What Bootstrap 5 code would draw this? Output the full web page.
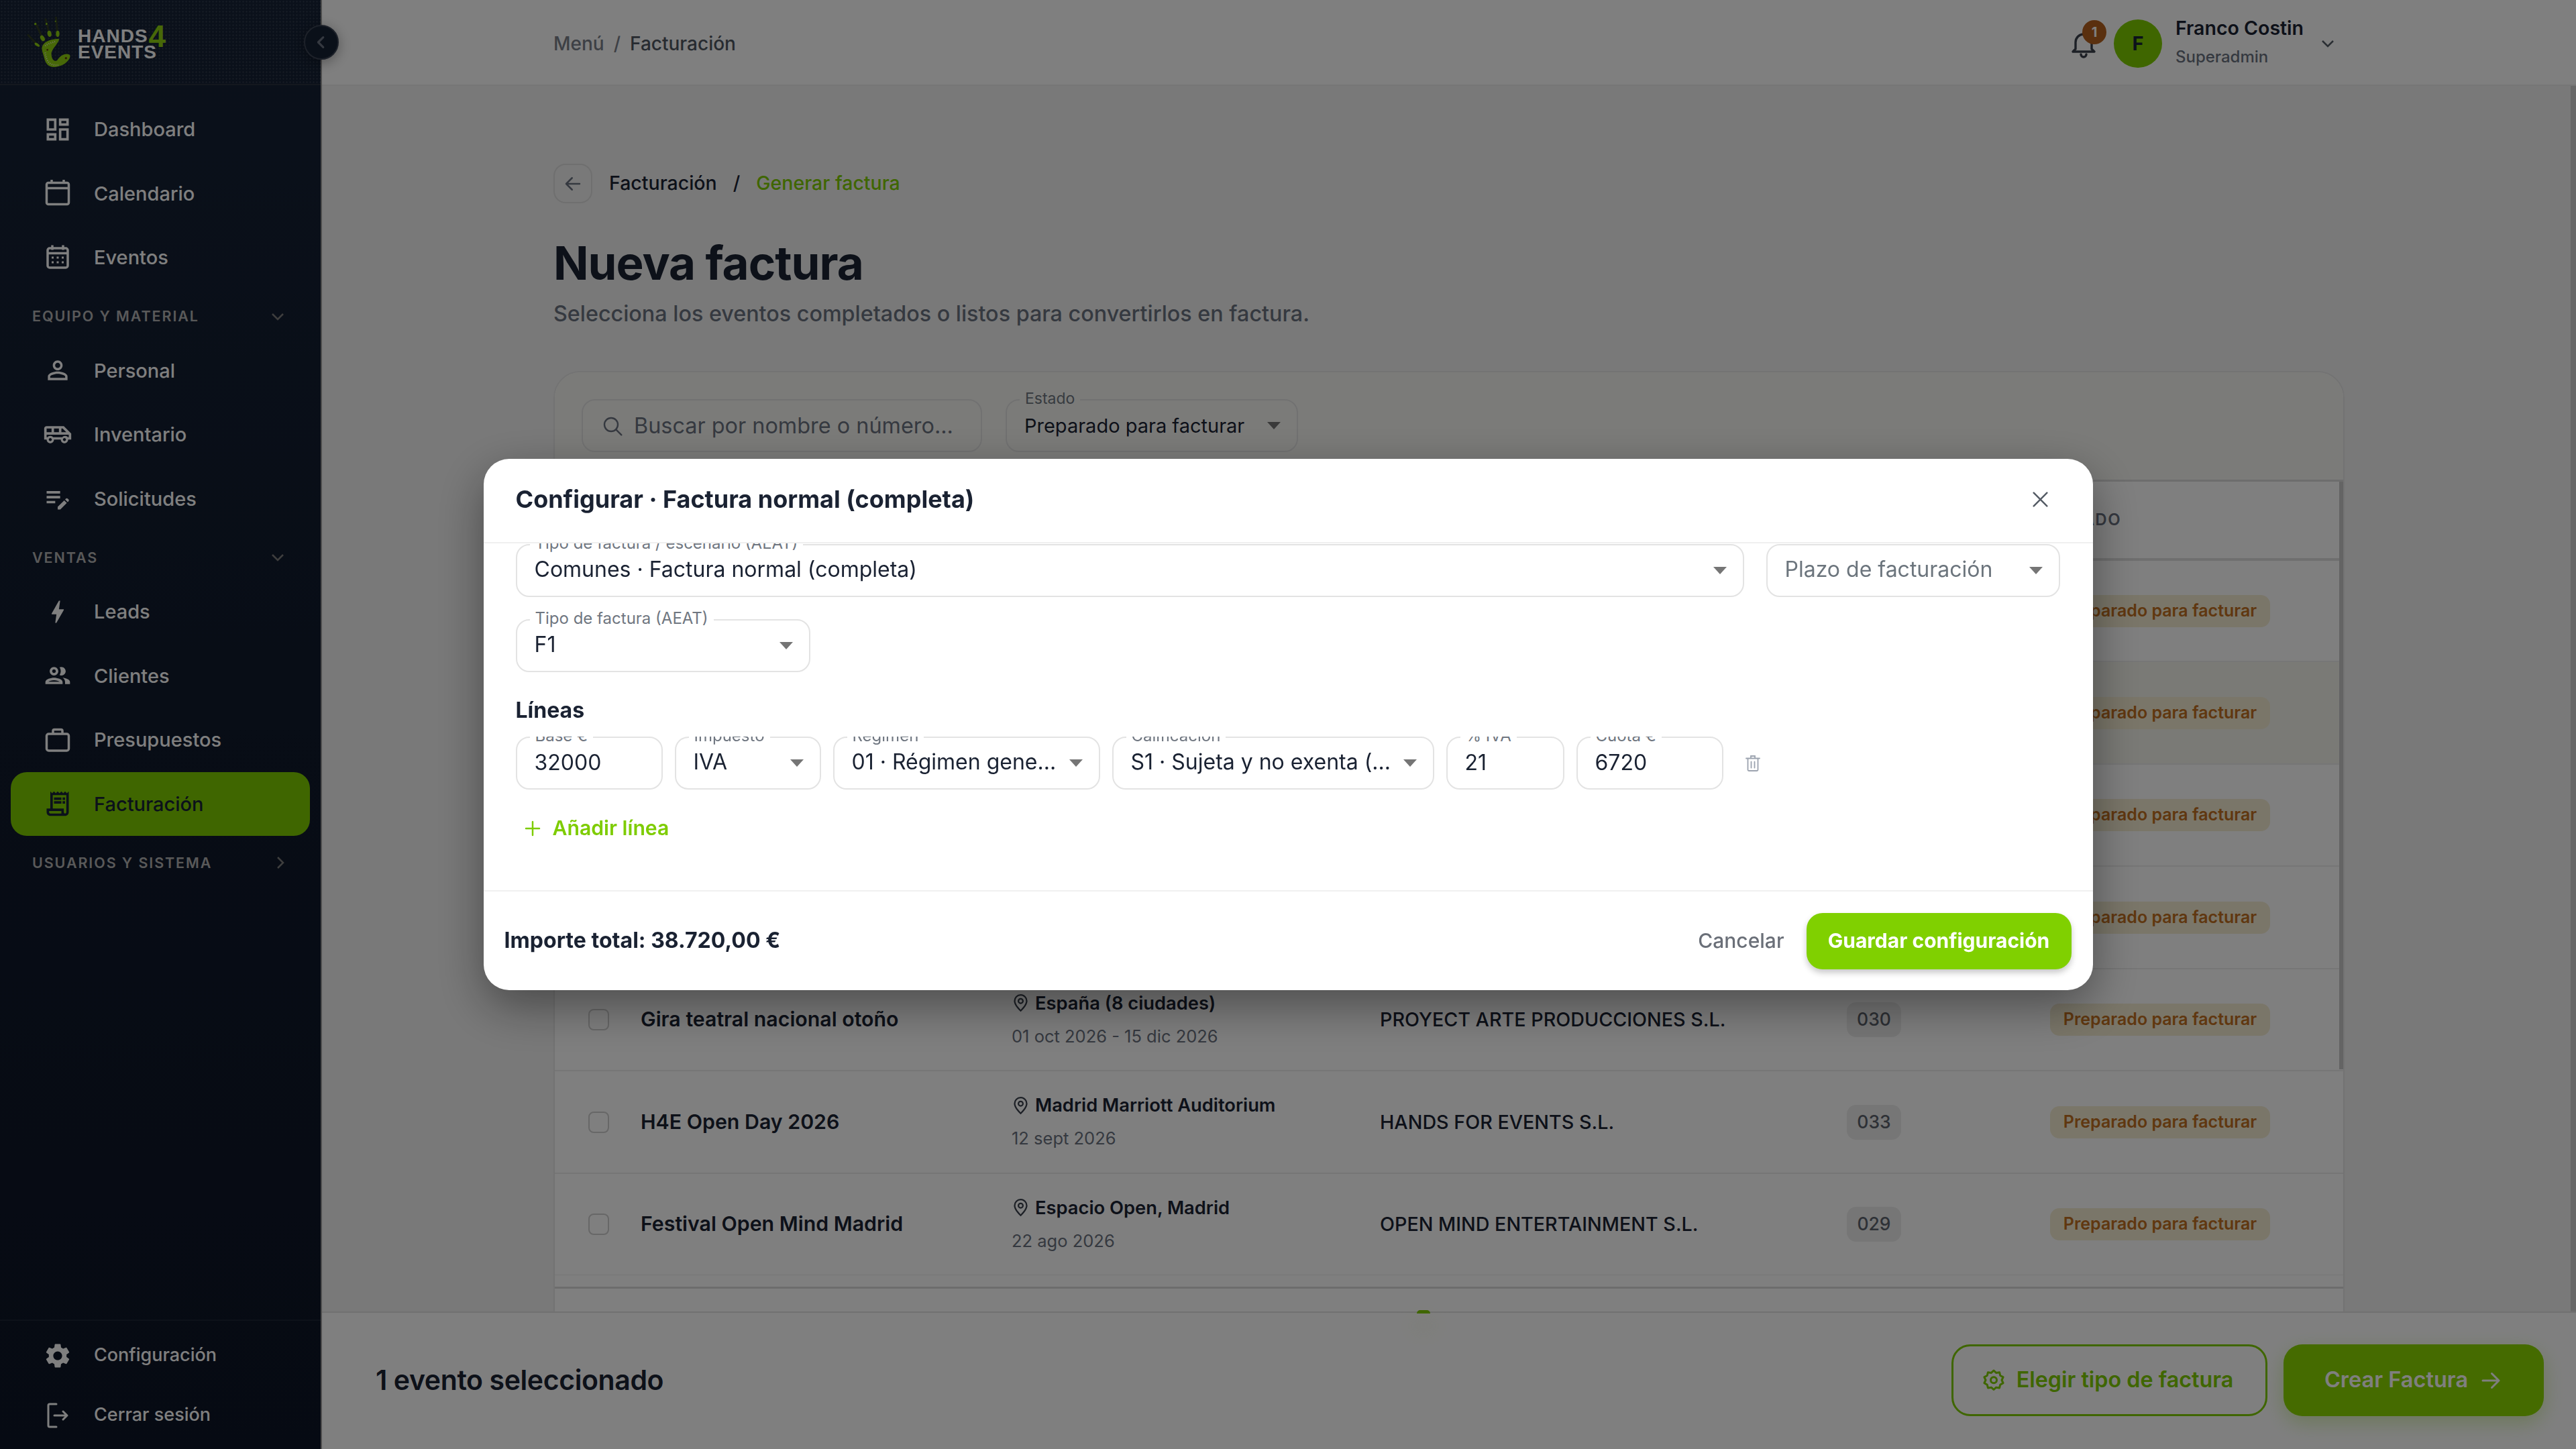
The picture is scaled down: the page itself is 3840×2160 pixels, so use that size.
<!DOCTYPE html>
<html lang="es">
<head>
<meta charset="utf-8">
<title>Nueva factura</title>
<link href="https://cdn.jsdelivr.net/npm/bootstrap@5.3.0/dist/css/bootstrap.min.css" rel="stylesheet">
<style>
html,body{height:100%}
body{font-family:Inter,"Noto Sans",sans-serif;color:#1a2232;background:#f3f3f3;overflow:hidden;height:2160px;width:3840px}
svg{display:block;flex:none}
.app-shell{height:2160px}
.sidebar{width:480px;flex:none;background:linear-gradient(180deg,#162236 0,#101a2c 50%,#0d1526 100%);color:#fff;border-right:2px solid #9a9a9a}
.side-head{height:127px;flex:none;padding:25px 0 0 40px;border-bottom:2px solid #28303f;gap:10px;background-image:radial-gradient(rgba(255,255,255,.09) 1px,transparent 1.4px);background-size:5px 5px}
.logo-words{color:#fff;font-family:"Liberation Sans",sans-serif;font-weight:700;font-size:28px;letter-spacing:1px;line-height:24px;padding-top:17px;width:140px}
.logo-line{height:24px}
.logo-four{color:#8fd010;font-size:46px;line-height:24px;letter-spacing:0;margin-left:1px}
.side-toggle{width:52px;height:52px;top:37px;right:-27px;background:#142033;border:2px solid #3a4353;border-radius:50%;box-shadow:0 4px 20px rgba(0,0,0,.35);z-index:3}
.side-nav{padding-top:18px}
.side-link{height:95.5px;margin:0 16px;padding-left:48px;gap:32px;color:#fff;text-decoration:none;font-size:29px;font-weight:500;border-radius:24px}
.side-link.is-on{background:#7ecc00;color:#162236}
.side-sec{height:73px;padding:7px 54px 0 48px;color:#b3b3b3;font-size:21.5px;font-weight:600;letter-spacing:1.9px}
.side-foot{padding:7px 0 6px;border-top:2px solid #1b2434}
.side-foot .side-link{height:89px;font-size:27px;padding-left:48px}
.main-col{min-width:0}
.topbar{height:128px;flex:none;background:#fff;border-bottom:2px solid #ececec;padding:4px 360px 0 345px}
.crumb-top{font-size:28px;font-weight:500;color:#7a808a;gap:14px}
.crumb-top b{font-weight:500;color:#4f5661}
.bell-wrap{width:60px;height:60px;margin-right:9px}
.bell-badge{top:-5px;left:22px;width:36px;height:36px;background:#b4601e;color:#fff;font-size:20px;font-weight:700;border-radius:50%}
.avatar{width:72px;height:72px;background:#7ecc00;border-radius:50%;font-size:29px;font-weight:700;color:#162236}
.who-name{font-size:28.500px;font-weight:600;line-height:1.2;margin-top:-6px}
.who-role{font-size:24px;font-weight:500;color:#6b7280;margin-top:12px;line-height:1.2}
.who-caret{margin-left:26px}
.content-area{min-height:0;overflow:hidden;border-right:8px solid #d2d2d2;padding:116px 337px 0 345px}
.back-btn{width:58px;height:59px;border:2px solid #dedede;border-radius:18px;background:transparent}
.crumb-page{font-size:28.500px;font-weight:500;gap:24px;margin-left:25px}
.crumb-green{color:#7ecc00}
.page-title{font-size:69px;font-weight:700;letter-spacing:-1px;line-height:1;margin:55px 0 0}
.page-sub{font-size:32.300px;font-weight:500;color:#6b7280;margin:22px 0 0;line-height:1.2}
.panel{margin-top:65px;border:2px solid #e6e6e6;border-radius:40px 40px 0 0;background:#fff;height:1500px;overflow:hidden}
.panel-top{height:160px;flex:none;background:#f7f7f3;padding:40px 40px 0;gap:35px}
.fld{height:79px;border:2px solid #e3e3e3;border-radius:20px}
.search-fld{width:597px;gap:16px;padding:2px 0 0 28px;color:#6b7280;font-size:32.400px}
.fld-box{height:79px}
.fld-label{top:-16px;left:21px;padding:0 8px;background:#fff;font-size:24px;line-height:30px;color:#6f7680;white-space:nowrap;z-index:2}
.panel-top .fld-label{background:#f7f7f3;font-size:23px}
.ctl{height:100%;border:2px solid #e3e3e3;border-radius:20px;font-size:32px;color:#1a2232;padding:0 26px 3px;background-color:transparent;box-shadow:none}
.form-select.ctl{padding-right:58px;background-image:url("data:image/svg+xml,%3csvg xmlns='http://www.w3.org/2000/svg' viewBox='0 0 20 11'%3e%3cpath fill='%23757575' d='M0 0h20L10 11z'/%3e%3c/svg%3e");background-size:20px 11px;background-position:right 24px center}
.st-sel{width:436px}
.st-sel .ctl{font-size:29px;padding-bottom:0}
.table-wrap{height:1186px;overflow:hidden;border-top:3px solid #dbdbdb;flex:none}
.inv-table{table-layout:fixed;width:2667px;margin:0}
.inv-table td,.inv-table th{padding:0;vertical-align:middle;border-bottom:2px solid #ececec;background:transparent;box-shadow:none}
.inv-table th{height:116px;font-size:24px;font-weight:600;letter-spacing:1.500px;color:#6b7280;border-bottom-width:4px;border-color:#dedede}
.inv-table td{height:152.500px;color:#1a2232}
.c1{width:128px}.c2{width:553px}.c3{width:549px}.c4{width:696px}.c5{width:303px}
.inv-table td:first-child,.inv-table th:first-child{padding-left:50px}
.row-on td{background:#f4f4ec}
.chk-box{width:31px;height:32px;border:2px solid #cfcfcf;border-radius:8px;display:block}
.row-on .chk-box{background:#7ecc00;border-color:#7ecc00}
.ev-name{font-size:30.300px;font-weight:600}
.ev-loc{font-size:27.300px;font-weight:600;gap:8px;line-height:30px}
.ev-date{font-size:25.500px;color:#6b7280;margin-top:19px;line-height:30px}
.ev-client{font-size:28.700px;font-weight:500;color:#454b55}
.num-pill{width:81px;height:52px;background:#ededed;color:#5c626c;font-size:26.500px;font-weight:500;border-radius:14px}
.st-pill{width:328px;height:48px;background:#f4ecd2;color:#c06f20;font-size:25px;font-weight:600;border-radius:14px}
.thin-bar{top:0;right:0;width:6px;height:876px;background:#c9c9c9}
.panel-rest{border-top:3px solid #dbdbdb;margin-top:17px}
.actionbar{height:205px;flex:none;background:#fff;border-top:2px solid #e2e2e2;padding:0 48px 2px 80px}
.sel-count{font-size:41px;font-weight:600;letter-spacing:-.4px}
.btn-ghost-g{height:107px;width:471px;border:3px solid #7ecc00;border-radius:28px;color:#7ecc00;font-size:32.300px;font-weight:600;gap:16px;background:transparent;padding:0 6px 0 0}
.btn-solid-g{height:107px;width:388px;margin-left:24px;background:#8ad600;border:0;border-radius:28px;color:#fff;font-size:32.500px;font-weight:600;gap:16px;box-shadow:0 10px 30px rgba(126,204,0,.3)}
.blip{left:1632px;top:-4px;width:20px;height:5px;background:#7ecc00;border-radius:10px 10px 0 0;box-shadow:0 20px 30px 10px rgba(220,230,160,.15)}
.modal{--bs-modal-width:2399px}
.modal-dialog{--bs-modal-margin:0px}
.cfg-modal{border:0;border-radius:38px;height:792px;box-shadow:0 24px 70px rgba(0,0,0,.4);overflow:hidden}
.cfg-head{height:126px;flex:none;padding:0 58px 4px 48px;border-bottom:2px solid #f0f0f0}
.cfg-title{font-size:36px;font-weight:700;margin:0}
.x-btn{width:40px;height:40px;padding:0;background:none;border:0}
.cfg-body{padding:1px 49px 0 48px;overflow:hidden;flex:1 1 auto;min-height:0}
.gap-33{gap:33px}
.w-plazo{width:438px;flex:none}
.w-tipo{width:439px;margin-top:33px}
.lineas-h{font-size:32px;font-weight:700;margin:38px 0 0;line-height:38px}
.line-clip{overflow:hidden;margin-top:20px;gap:18px}
.w-base{width:219px}.w-imp{width:218px}.w-reg{width:398px}.w-cal{width:480px}.w-iva{width:176px}.w-cuo{width:219px}
.line-clip .fld-box,.line-clip .ctl{flex:none}
.trash-slot{margin-left:14px;width:24px;align-self:center}
.add-line{color:#7ecc00;font-size:30.200px;font-weight:600;gap:18px;padding:0 0 0 13px;margin-top:35px;background:none;border:0}
.cfg-foot{height:149px;flex:none;padding:0 28px 0 27px;border-top:2px solid #f0f0f0}
.tot-txt{font-size:32.100px;font-weight:700}
.cancel-btn{font-size:30px;font-weight:500;color:#6a6f78;background:none;border:0;padding:0;margin-right:33px}
.save-btn{width:395px;height:84px;background:#80d000;border:0;border-radius:24px;color:#fff;font-size:30px;font-weight:700;box-shadow:0 5px 10px rgba(0,0,0,.22);padding:0}
</style>
</head>
<body>
<div class="app-shell d-flex">
  <aside class="sidebar d-flex flex-column position-relative">
    <div class="side-head d-flex align-items-start">
      <svg width="66" height="76" viewBox="30 30 198 228">
        <g fill="none" stroke-linecap="round" stroke="#2f3a22" stroke-width="9">
          <path d="M36 112L80 158"/>
          <path d="M70 60L100 125"/>
          <path d="M114 42L133 112"/>
          <path d="M160 32L168 112"/>
        </g>
        <g fill="#8fd010">
          <ellipse cx="76" cy="155" rx="13" ry="6" transform="rotate(35 76 155)"/>
          <ellipse cx="100" cy="126" rx="9" ry="14" transform="rotate(-30 100 126)"/>
          <ellipse cx="131" cy="106" rx="9" ry="14" transform="rotate(-10 131 106)"/>
          <ellipse cx="168" cy="106" rx="8" ry="14"/>
          <circle cx="68" cy="62" r="5"/><circle cx="118" cy="62" r="4"/><circle cx="158" cy="50" r="3"/>
          <path d="M100 160C110 135 160 125 175 130C170 150 150 165 140 190C138 215 150 232 165 226C178 205 200 190 222 200C230 215 205 245 170 252C135 262 115 245 108 215C104 195 92 175 100 160Z"/>
        </g>
        <path d="M112 160C125 150 145 145 160 140M112 190C115 225 130 250 170 246" fill="none" stroke="#e6f3c8" stroke-width="7" stroke-dasharray="3 6"/>
        <circle cx="205" cy="215" r="5" fill="#5a3a10"/><circle cx="122" cy="178" r="4" fill="#5a3a10"/>
      </svg>
      <div class="logo-words">
        <div class="logo-line d-flex">HANDS<span class="logo-four">4</span></div>
        <div class="logo-line">EVENTS</div>
      </div>
    </div>
    <button class="side-toggle position-absolute d-flex align-items-center justify-content-center p-0" aria-label="Contraer">
      <svg width="22" height="22" viewBox="0 0 24 24" fill="none" stroke="#6b7280" stroke-width="3.500" stroke-linecap="round" stroke-linejoin="round"><path d="M15 4l-8 8 8 8"/></svg>
    </button>
    <nav class="side-nav d-flex flex-column">
      <a class="side-link d-flex align-items-center" href="#"><svg width="44" height="44" viewBox="0 0 24 24" fill="currentColor"><path d="M19 5v2h-4V5h4M9 5v6H5V5h4m10 8v6h-4v-6h4M9 17v2H5v-2h4M21 3h-8v6h8V3zM11 3H3v10h8V3zm10 8h-8v10h8V11zm-10 4H3v6h8v-6z"/></svg>Dashboard</a>
      <a class="side-link d-flex align-items-center" href="#"><svg width="44" height="44" viewBox="0 0 44 44" fill="none" stroke="currentColor" stroke-width="3.500"><rect x="5.500" y="6.500" width="33" height="32" rx="2.500"/><path d="M5.500 14.500h33M13 2v6M31 2v6"/></svg>Calendario</a>
      <a class="side-link d-flex align-items-center" href="#"><svg width="44" height="44" viewBox="0 0 44 44" fill="none" stroke="currentColor" stroke-width="3.500"><rect x="7" y="8" width="30" height="29" rx="3"/><path d="M7 15.500h30M14 3.500v7M30 3.500v7"/><path d="M13 22h3M20.500 22h3M28 22h3M13 29h3M20.500 29h3M28 29h3" stroke-width="3"/></svg>Eventos</a>
      <div class="side-sec d-flex align-items-center justify-content-between">EQUIPO Y MATERIAL<svg width="20" height="12" viewBox="0 0 20 12" fill="none" stroke="#7d7d7d" stroke-width="2.500"><path d="M2 2l8 8 8-8"/></svg></div>
      <a class="side-link d-flex align-items-center" href="#"><svg width="44" height="44" viewBox="0 0 24 24" fill="currentColor"><path d="M12 5.900c1.160 0 2.100.940 2.100 2.100s-.940 2.100-2.100 2.100S9.900 9.160 9.900 8s.940-2.100 2.100-2.100m0 9c2.970 0 6.100 1.460 6.100 2.100v1.100H5.900V17c0-.640 3.130-2.100 6.100-2.100M12 4C9.790 4 8 5.790 8 8s1.790 4 4 4 4-1.790 4-4-1.790-4-4-4zm0 9c-2.670 0-8 1.340-8 4v3h16v-3c0-2.660-5.330-4-8-4z"/></svg>Personal</a>
      <a class="side-link d-flex align-items-center" href="#"><svg width="44" height="44" viewBox="0 0 24 24" fill="currentColor"><path d="M17 5H3c-1.100 0-2 .890-2 2v9h2c0 1.650 1.340 3 3 3s3-1.350 3-3h5.500c0 1.650 1.340 3 3 3s3-1.350 3-3H23v-5l-6-6zm-2 2h1l3 3h-4V7zM9 7h4v3H9V7zM3 7h4v3H3V7zm3 10.250c-.690 0-1.250-.560-1.250-1.250s.560-1.250 1.250-1.250 1.250.560 1.250 1.250-.560 1.250-1.250 1.250zm11.500 0c-.690 0-1.250-.560-1.250-1.250s.560-1.250 1.250-1.250 1.250.560 1.250 1.250-.560 1.250-1.250 1.250zM21 14h-.780c-.550-.610-1.340-1-2.220-1s-1.670.390-2.220 1H8.220c-.550-.610-1.330-1-2.220-1s-1.670.390-2.220 1H3v-2h18v2z"/></svg>Inventario</a>
      <a class="side-link d-flex align-items-center" href="#"><svg width="44" height="44" viewBox="0 0 24 24" fill="currentColor"><path d="M3 10h11v2H3v-2zm0-2h11V6H3v2zm0 8h7v-2H3v2zm15.010-3.130.710-.710c.390-.390 1.020-.390 1.410 0l.710.710c.390.390.390 1.020 0 1.410l-.710.710-2.120-2.120zm-.710.710-5.300 5.300V21h2.120l5.300-5.300-2.120-2.120z"/></svg>Solicitudes</a>
      <div class="side-sec d-flex align-items-center justify-content-between">VENTAS<svg width="20" height="12" viewBox="0 0 20 12" fill="none" stroke="#7d7d7d" stroke-width="2.500"><path d="M2 2l8 8 8-8"/></svg></div>
      <a class="side-link d-flex align-items-center" href="#"><svg width="44" height="44" viewBox="0 0 24 24" fill="currentColor"><path d="M11 21h-1l1-7H7.500c-.580 0-.570-.320-.380-.660.190-.340.050-.080.070-.120C8.480 10.940 10.420 7.540 13 3h1l-1 7h3.500c.490 0 .560.330.470.510l-.070.150C12.960 17.550 11 21 11 21z"/></svg>Leads</a>
      <a class="side-link d-flex align-items-center" href="#"><svg width="44" height="44" viewBox="0 0 24 24" fill="currentColor"><path d="M9 13.750c-2.340 0-7 1.170-7 3.500V19h14v-1.750c0-2.330-4.660-3.500-7-3.500zM4.340 17c.840-.580 2.870-1.250 4.660-1.250s3.820.670 4.660 1.250H4.340zM9 12c1.930 0 3.500-1.570 3.500-3.500S10.930 5 9 5 5.500 6.570 5.500 8.500 7.070 12 9 12zm0-5c.830 0 1.500.670 1.500 1.500S9.830 10 9 10s-1.500-.670-1.500-1.500S8.170 7 9 7zm7.040 6.810c1.160.840 1.960 1.960 1.960 3.440V19h4v-1.750c0-2.020-3.500-3.170-5.960-3.440zM15 12c1.930 0 3.500-1.570 3.500-3.500S16.930 5 15 5c-.540 0-1.040.130-1.500.350.630.890 1 1.980 1 3.150s-.370 2.260-1 3.150c.460.220.960.350 1.500.350z"/></svg>Clientes</a>
      <a class="side-link d-flex align-items-center" href="#"><svg width="44" height="44" viewBox="0 0 44 44" fill="none" stroke="currentColor" stroke-width="3.500"><rect x="5.500" y="13" width="33" height="25" rx="3"/><path d="M15 13V8.500a2 2 0 0 1 2-2h10a2 2 0 0 1 2 2V13"/></svg>Presupuestos</a>
      <a class="side-link is-on d-flex align-items-center" href="#"><svg width="44" height="44" viewBox="0 0 24 24" fill="currentColor"><path d="M19.500 3.500 18 2l-1.500 1.500L15 2l-1.500 1.500L12 2l-1.500 1.500L9 2 7.500 3.500 6 2v14H3v3c0 1.660 1.340 3 3 3h12c1.660 0 3-1.340 3-3V2l-1.500 1.500zM15 20H6c-.550 0-1-.450-1-1v-1h10v2zm4-1c0 .550-.450 1-1 1s-1-.450-1-1v-3H8V5h11v14z"/><path d="M9 7h6v2H9zM16 7h2v2h-2zM9 10h6v2H9zM16 10h2v2h-2z"/></svg>Facturación</a>
      <div class="side-sec d-flex align-items-center justify-content-between">USUARIOS Y SISTEMA<svg width="12" height="20" viewBox="0 0 12 20" fill="none" stroke="#7d7d7d" stroke-width="2.500"><path d="M2 2l8 8-8 8"/></svg></div>
    </nav>
    <div class="side-foot mt-auto d-flex flex-column">
      <a class="side-link d-flex align-items-center" href="#"><svg width="44" height="44" viewBox="0 0 24 24" fill="currentColor"><path d="M19.140 12.940c.040-.300.060-.610.060-.940 0-.320-.020-.640-.070-.940l2.030-1.580c.180-.140.230-.410.120-.610l-1.920-3.320c-.120-.220-.370-.290-.590-.220l-2.390.960c-.500-.380-1.030-.700-1.620-.940l-.360-2.540c-.040-.240-.240-.410-.480-.410h-3.840c-.240 0-.430.170-.470.410l-.360 2.540c-.590.240-1.130.570-1.620.940l-2.390-.960c-.220-.080-.470 0-.590.220L2.740 8.870c-.120.210-.080.470.120.610l2.030 1.580c-.050.300-.090.630-.090.940s.020.640.070.940l-2.030 1.580c-.180.140-.230.410-.120.610l1.920 3.320c.120.220.370.290.590.220l2.390-.960c.500.380 1.030.700 1.620.940l.360 2.540c.050.240.240.410.480.410h3.840c.240 0 .440-.170.470-.41l.360-2.540c.590-.240 1.130-.560 1.620-.94l2.390.960c.220.080.470 0 .590-.22l1.920-3.320c.120-.220.070-.470-.120-.610l-2.010-1.580zM12 15.600c-1.980 0-3.600-1.620-3.600-3.600s1.620-3.600 3.600-3.600 3.600 1.620 3.600 3.600-1.620 3.600-3.600 3.600z"/></svg>Configuración</a>
      <a class="side-link d-flex align-items-center" href="#"><svg width="44" height="44" viewBox="0 0 44 44" fill="none" stroke="currentColor" stroke-width="3" stroke-linecap="round" stroke-linejoin="round"><path d="M20 5H10a2 2 0 0 0-2 2v30a2 2 0 0 0 2 2h10M17 22h19M30 16l6 6-6 6"/></svg>Cerrar sesión</a>
    </div>
  </aside>

  <div class="main-col flex-grow-1 d-flex flex-column">
    <header class="topbar d-flex align-items-center justify-content-between">
      <div class="crumb-top d-flex align-items-center"><span>Menú</span><span>/</span><b>Facturación</b></div>
      <div class="d-flex align-items-center">
        <div class="bell-wrap position-relative d-flex align-items-center">
          <svg width="48" height="48" viewBox="0 0 24 24" fill="none" stroke="#3a414d" stroke-width="1.700" stroke-linecap="round" stroke-linejoin="round"><path d="M18 16V11a6 6 0 0 0-12 0v5l-2 2h16z"/><path d="M10 20a2 2 0 0 0 4 0"/></svg>
          <span class="bell-badge position-absolute d-flex align-items-center justify-content-center">1</span>
        </div>
        <div class="avatar d-flex align-items-center justify-content-center">F</div>
        <div class="ms-3 ps-1"><div class="who-name">Franco Costin</div><div class="who-role">Superadmin</div></div>
        <svg class="who-caret" width="20" height="12" viewBox="0 0 20 12" fill="none" stroke="#555c66" stroke-width="2.500"><path d="M2 2l8 8 8-8"/></svg>
      </div>
    </header>

    <div class="content-area flex-grow-1">
      <div class="d-flex align-items-center">
        <button class="back-btn d-flex align-items-center justify-content-center p-0" aria-label="Volver"><svg width="30" height="30" viewBox="0 0 24 24" fill="none" stroke="#6b7280" stroke-width="2" stroke-linecap="round" stroke-linejoin="round"><path d="M20 12H4M11 5l-7 7 7 7"/></svg></button>
        <div class="crumb-page d-flex align-items-center"><span>Facturación</span><span>/</span><span class="crumb-green">Generar factura</span></div>
      </div>
      <h1 class="page-title">Nueva factura</h1>
      <p class="page-sub">Selecciona los eventos completados o listos para convertirlos en factura.</p>

      <div class="panel d-flex flex-column">
        <div class="panel-top d-flex">
          <div class="fld search-fld d-flex align-items-center">
            <svg width="32" height="32" viewBox="0 0 24 24" fill="none" stroke="#6b7280" stroke-width="1.800" stroke-linecap="round"><circle cx="10.500" cy="10.500" r="7.500"/><path d="M16 16l6 6"/></svg>
            <span>Buscar por nombre o número...</span>
          </div>
          <div class="fld-box position-relative st-sel">
            <span class="fld-label position-absolute">Estado</span>
            <select class="form-select ctl" aria-label="Estado"><option>Preparado para facturar</option></select>
          </div>
        </div>
        <div class="table-wrap position-relative">
          <table class="table inv-table">
            <colgroup><col class="c1"><col class="c2"><col class="c3"><col class="c4"><col class="c5"><col></colgroup>
            <thead><tr><th><span class="chk-box"></span></th><th>EVENTO</th><th>LUGAR Y FECHA</th><th>CLIENTE</th><th>Nº</th><th>ESTADO</th></tr></thead>
            <tbody>
              <tr><td><span class="chk-box"></span></td><td></td><td></td><td></td><td></td><td><span class="st-pill d-flex align-items-center justify-content-center">Preparado para facturar</span></td></tr>
              <tr class="row-on"><td><span class="chk-box"></span></td><td></td><td></td><td></td><td></td><td><span class="st-pill d-flex align-items-center justify-content-center">Preparado para facturar</span></td></tr>
              <tr><td><span class="chk-box"></span></td><td></td><td></td><td></td><td></td><td><span class="st-pill d-flex align-items-center justify-content-center">Preparado para facturar</span></td></tr>
              <tr><td><span class="chk-box"></span></td><td></td><td></td><td></td><td></td><td><span class="st-pill d-flex align-items-center justify-content-center">Preparado para facturar</span></td></tr>
              <tr><td><span class="chk-box"></span></td><td><span class="ev-name">Gira teatral nacional otoño</span></td>
                <td><div class="ev-loc d-flex align-items-center"><svg width="27" height="27" viewBox="0 0 24 24" fill="none" stroke="#3a414d" stroke-width="2"><path d="M12 22s8-7.500 8-13a8 8 0 0 0-16 0c0 5.500 8 13 8 13z"/><circle cx="12" cy="9" r="3"/></svg>España (8 ciudades)</div><div class="ev-date">01 oct 2026 - 15 dic 2026</div></td>
                <td class="ev-client">PROYECT ARTE PRODUCCIONES S.L.</td><td><span class="num-pill d-flex align-items-center justify-content-center">030</span></td><td><span class="st-pill d-flex align-items-center justify-content-center">Preparado para facturar</span></td></tr>
              <tr><td><span class="chk-box"></span></td><td><span class="ev-name">H4E Open Day 2026</span></td>
                <td><div class="ev-loc d-flex align-items-center"><svg width="27" height="27" viewBox="0 0 24 24" fill="none" stroke="#3a414d" stroke-width="2"><path d="M12 22s8-7.500 8-13a8 8 0 0 0-16 0c0 5.500 8 13 8 13z"/><circle cx="12" cy="9" r="3"/></svg>Madrid Marriott Auditorium</div><div class="ev-date">12 sept 2026</div></td>
                <td class="ev-client">HANDS FOR EVENTS S.L.</td><td><span class="num-pill d-flex align-items-center justify-content-center">033</span></td><td><span class="st-pill d-flex align-items-center justify-content-center">Preparado para facturar</span></td></tr>
              <tr><td><span class="chk-box"></span></td><td><span class="ev-name">Festival Open Mind Madrid</span></td>
                <td><div class="ev-loc d-flex align-items-center"><svg width="27" height="27" viewBox="0 0 24 24" fill="none" stroke="#3a414d" stroke-width="2"><path d="M12 22s8-7.500 8-13a8 8 0 0 0-16 0c0 5.500 8 13 8 13z"/><circle cx="12" cy="9" r="3"/></svg>Espacio Open, Madrid</div><div class="ev-date">22 ago 2026</div></td>
                <td class="ev-client">OPEN MIND ENTERTAINMENT S.L.</td><td><span class="num-pill d-flex align-items-center justify-content-center">029</span></td><td><span class="st-pill d-flex align-items-center justify-content-center">Preparado para facturar</span></td></tr>
            </tbody>
          </table>
          <div class="thin-bar position-absolute"></div>
        </div>
        <div class="panel-rest flex-grow-1"></div>
      </div>
    </div>

    <div class="actionbar d-flex align-items-center justify-content-between position-relative">
      <span class="blip position-absolute"></span>
      <div class="sel-count">1 evento seleccionado</div>
      <div class="d-flex">
        <button class="btn-ghost-g d-flex align-items-center justify-content-center"><svg width="36" height="36" viewBox="0 0 24 24" fill="none" stroke="currentColor" stroke-width="2" stroke-linejoin="round"><path d="M12 2l2.400 2.300 3.300-.500.800 3.200 2.900 1.600L20 11.500l1.400 3-2.900 1.600-.800 3.200-3.300-.500L12 21l-2.400-2.200-3.300.500-.800-3.200-2.900-1.600 1.400-3-1.400-2.900L5.500 7l.800-3.200 3.300.500z"/><circle cx="12" cy="11.500" r="3"/></svg>Elegir tipo de factura</button>
        <button class="btn-solid-g d-flex align-items-center justify-content-center">Crear Factura<svg width="36" height="36" viewBox="0 0 24 24" fill="none" stroke="currentColor" stroke-width="2" stroke-linecap="round" stroke-linejoin="round"><path d="M4 12h16M13 5l7 7-7 7"/></svg></button>
      </div>
    </div>
  </div>
</div>

<div class="modal-backdrop fade show"></div>
<div class="modal fade show d-block" tabindex="-1">
  <div class="modal-dialog modal-dialog-centered">
    <div class="modal-content cfg-modal d-flex flex-column">
      <div class="cfg-head modal-header">
        <h2 class="cfg-title modal-title">Configurar · Factura normal (completa)</h2>
        <button class="x-btn d-flex align-items-center justify-content-center" aria-label="Cerrar"><svg width="25" height="25" viewBox="0 0 28 28" fill="none" stroke="#555c66" stroke-width="2.800" stroke-linecap="round"><path d="M3 3l22 22M25 3L3 25"/></svg></button>
      </div>
      <div class="cfg-body modal-body">
        <div class="d-flex gap-33">
          <div class="fld-box position-relative flex-grow-1">
            <span class="fld-label position-absolute">Tipo de factura / escenario (AEAT)</span>
            <select class="form-select ctl" aria-label="Tipo de factura"><option>Comunes · Factura normal (completa)</option></select>
          </div>
          <div class="fld-box w-plazo"><select class="form-select ctl text-secondary" aria-label="Plazo"><option>Plazo de facturación</option></select></div>
        </div>
        <div class="fld-box position-relative w-tipo">
          <span class="fld-label position-absolute">Tipo de factura (AEAT)</span>
          <select class="form-select ctl" aria-label="Tipo AEAT"><option>F1</option></select>
        </div>
        <h3 class="lineas-h">Líneas</h3>
        <div class="line-clip d-flex">
          <div class="fld-box position-relative w-base"><span class="fld-label position-absolute">Base €</span><input class="form-control ctl" value="32000" aria-label="Base"></div>
          <div class="fld-box position-relative w-imp"><span class="fld-label position-absolute">Impuesto</span><select class="form-select ctl" aria-label="Impuesto"><option>IVA</option></select></div>
          <div class="fld-box position-relative w-reg"><span class="fld-label position-absolute">Régimen</span><select class="form-select ctl" aria-label="Régimen"><option>01 · Régimen gene...</option></select></div>
          <div class="fld-box position-relative w-cal"><span class="fld-label position-absolute">Calificación</span><select class="form-select ctl" aria-label="Calificación"><option>S1 · Sujeta y no exenta (...</option></select></div>
          <div class="fld-box position-relative w-iva"><span class="fld-label position-absolute">% IVA</span><input class="form-control ctl" value="21" aria-label="IVA"></div>
          <div class="fld-box position-relative w-cuo"><span class="fld-label position-absolute">Cuota €</span><input class="form-control ctl" value="6720" aria-label="Cuota"></div>
          <div class="trash-slot"><svg width="24" height="27" viewBox="0 0 24 26" fill="none" stroke="#9ca3af" stroke-width="1.800" stroke-linecap="round"><path d="M2 6h20M9 6V2.500h6V6M4.500 6v17a1.500 1.500 0 0 0 1.500 1.500h12a1.500 1.500 0 0 0 1.500-1.500V6M9.500 11v9M14.500 11v9"/></svg></div>
        </div>
        <button class="add-line d-flex align-items-center"><svg width="24" height="24" viewBox="0 0 24 24" fill="none" stroke="currentColor" stroke-width="2.500" stroke-linecap="round"><path d="M12 2v20M2 12h20"/></svg>Añadir línea</button>
      </div>
      <div class="cfg-foot modal-footer d-flex align-items-center justify-content-between">
        <div class="tot-txt">Importe total: 38.720,00 €</div>
        <div class="d-flex align-items-center"><button class="cancel-btn">Cancelar</button><button class="save-btn">Guardar configuración</button></div>
      </div>
    </div>
  </div>
</div>
<script src="https://cdn.jsdelivr.net/npm/bootstrap@5.3.0/dist/js/bootstrap.bundle.min.js"></script>
</body>
</html>
